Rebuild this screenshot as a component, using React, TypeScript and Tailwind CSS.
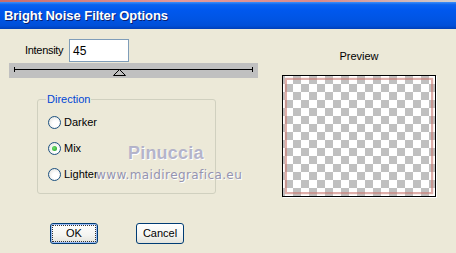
import React from "react";

const ui = "font-['Liberation_Sans',Arial,sans-serif]";

function Radio({ label, checked }: { label: string; checked?: boolean }) {
  return (
    <div className="flex h-[26px] items-center gap-[3px]">
      <span className="flex h-[13px] w-[13px] items-center justify-center rounded-full border border-[#1c5180] bg-[radial-gradient(circle_at_60%_60%,#ffffff_30%,#dcdcd6_100%)]">
        {checked ? (
          <span className="h-[5px] w-[5px] rounded-full bg-[radial-gradient(circle_at_40%_40%,#6fe06f,#1e9a1e)]" />
        ) : null}
      </span>
      <span className="text-[11px] leading-[13px] text-black">{label}</span>
    </div>
  );
}

function XPButton({ children, focused }: { children: React.ReactNode; focused?: boolean }) {
  return (
    <button
      className={
        "flex h-[21px] w-[48px] items-center justify-center rounded-[3px] border border-[#003c74] bg-[linear-gradient(to_bottom,#ffffff_0%,#f4f4f0_60%,#e3e3db_100%)] p-[1px] text-[11px] text-black " +
        (focused ? "shadow-[inset_0_0_0_1px_#9dbcf5]" : "")
      }
    >
      <span
        className={
          "flex h-full w-full items-center justify-center " +
          (focused ? "border border-dotted border-[#333]" : "")
        }
      >
        {children}
      </span>
    </button>
  );
}

export default function App() {
  return (
    <div className={`${ui} relative flex h-[253px] w-[456px] flex-col overflow-hidden bg-[#ece9d8]`}>
      {/* desktop peeking above the window */}
      <div className="h-[2px] bg-[linear-gradient(to_right,#c86c6c,#e49a9a_40%,#d98a8a_70%,#cfcfcf)]" />

      {/* ── Title bar ── */}
      <div className="flex h-[27px] items-center bg-[linear-gradient(to_bottom,#3d8ff8_0%,#0a62ef_10%,#0058ee_30%,#0054e3_65%,#004fd8_88%,#003fb8_100%)] pl-[4px]">
        <span className="text-[13px] font-bold tracking-[-0.05px] text-white [text-shadow:1px_1px_0_#0a1f6e]">
          Bright Noise Filter Options
        </span>
      </div>

      <div className="flex flex-1">
        {/* ── Left column ── */}
        <div className="flex w-[270px] flex-col">
          <div className="mt-[10px] flex items-center pl-[25px]">
            <span className="w-[44px] text-[11px] tracking-[-0.3px] text-black">Intensity</span>
            <div className="flex h-[23px] w-[60px] items-center border border-[#7f9db9] bg-white pl-[3px] text-[12px] text-black">
              45
            </div>
          </div>

          {/* slider */}
          <div className="ml-[9px] mt-[1px] h-[15px] w-[249px] bg-[#c0c0c0]">
            <svg width="249" height="15" viewBox="0 0 249 15">
              <line x1="5" y1="6.5" x2="244" y2="6.5" stroke="#000" strokeWidth="1" />
              <line x1="5.5" y1="4" x2="5.5" y2="9" stroke="#000" strokeWidth="1" />
              <line x1="243.5" y1="4" x2="243.5" y2="9" stroke="#000" strokeWidth="1" />
              <polygon points="110.5,6.5 104.5,12.5 116.5,12.5" fill="#c0c0c0" stroke="#000" strokeWidth="1" />
            </svg>
          </div>

          {/* Direction group */}
          <fieldset className="ml-[37px] mt-[15px] h-[101px] w-[179px] rounded-[3px] border border-[#d0d0bf] px-[10px]">
            <legend className="ml-[-2px] px-[1px] text-[11px] leading-[13px] text-[#0046d5]">Direction</legend>
            <div className="mt-[3px] flex flex-col">
              <Radio label="Darker" />
              <Radio label="Mix" checked />
              <Radio label="Lighter" />
            </div>
          </fieldset>

          <div className="ml-[50px] mt-[29px] flex gap-[38px]">
            <XPButton focused>OK</XPButton>
            <XPButton>Cancel</XPButton>
          </div>
        </div>

        {/* ── Preview ── */}
        <div className="flex flex-col items-center pl-[12px]">
          <span className="mt-[21px] text-[11px] leading-[13px] text-black">Preview</span>
          <div className="mt-[12px] h-[122px] w-[154px] border border-black bg-white shadow-[1px_1px_0_#ffffff]">
            <div className="h-full w-full bg-[repeating-conic-gradient(#c0c0c0_0_25%,#ffffff_0_50%)] bg-[length:16px_16px] bg-[position:2px_0px] p-[2px]">
              <div className="h-full w-full border-[2px] border-[#c97a72]/60 shadow-[0_0_1px_#d49a90]" />
            </div>
          </div>
        </div>
      </div>

      {/* watermark over the dialog */}
      <span className="pointer-events-none absolute left-[128px] top-[140px] text-[18px] font-bold tracking-[0.2px] text-[#a8a8c4]/85 [text-shadow:1px_1px_0_#ffffff]">
        Pinuccia
      </span>
      <span className="pointer-events-none absolute left-[96px] top-[166px] font-['DejaVu_Sans',sans-serif] text-[12px] tracking-[0.4px] text-[#9494b0] [text-shadow:1px_1px_0_#ffffff]">
        www.maidiregrafica.eu
      </span>
    </div>
  );
}
